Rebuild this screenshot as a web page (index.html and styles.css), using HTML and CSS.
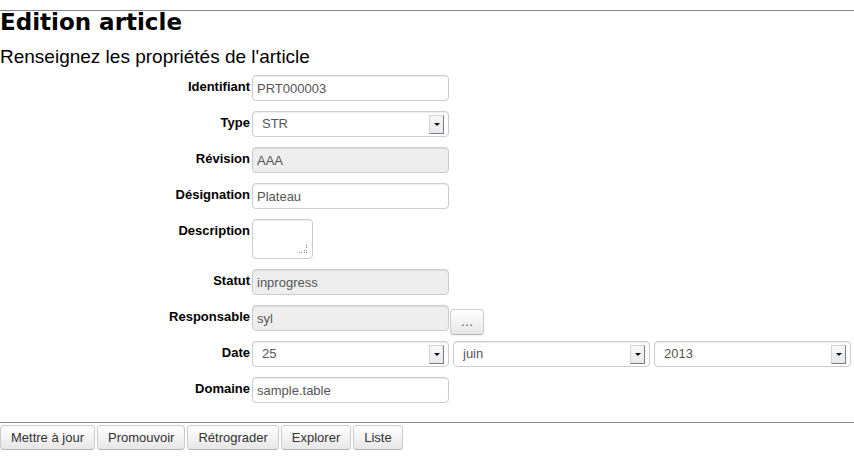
FILE: index.html
```html
<!DOCTYPE html>
<html lang="fr">
<head>
<meta charset="utf-8">
<title>Edition article</title>
<link rel="stylesheet" href="styles.css">
</head>
<body>
<header class="head">
  <h1 class="title">Edition article</h1>
  <h2 class="subtitle">Renseignez les propriétés de l'article</h2>
</header>
<form class="form">
  <label class="lbl">Identifiant</label>
  <div class="field"><input class="inp" value="PRT000003"></div>

  <label class="lbl">Type</label>
  <div class="field"><div class="sel"><select class="sel-box"><option>STR</option></select><span class="arrow"></span></div></div>

  <label class="lbl">Révision</label>
  <div class="field"><input class="inp ro" value="AAA" readonly></div>

  <label class="lbl">Désignation</label>
  <div class="field"><input class="inp" value="Plateau"></div>

  <label class="lbl">Description</label>
  <div class="field"><div class="ta-wrap"><textarea class="ta"></textarea><svg class="grip" width="8" height="8" viewBox="0 0 8 8"><g fill="#8a8a8a"><rect x="7" y="0" width="1" height="1"/><rect x="7" y="2" width="1" height="1"/><rect x="7" y="5" width="1" height="1"/><rect x="7" y="7" width="1" height="1"/><rect x="5" y="5" width="1" height="1"/><rect x="5" y="7" width="1" height="1"/><rect x="2" y="7" width="1" height="1"/><rect x="0" y="7" width="1" height="1"/></g></svg></div></div>

  <label class="lbl">Statut</label>
  <div class="field"><input class="inp ro" value="inprogress" readonly></div>

  <label class="lbl">Responsable</label>
  <div class="field field-tight"><input class="inp ro" value="syl" readonly><button type="button" class="btn btn-more">…</button></div>

  <label class="lbl">Date</label>
  <div class="field">
    <div class="sel"><select class="sel-box"><option>25</option></select><span class="arrow"></span></div>
    <div class="sel"><select class="sel-box"><option>juin</option></select><span class="arrow"></span></div>
    <div class="sel"><select class="sel-box"><option>2013</option></select><span class="arrow"></span></div>
  </div>

  <label class="lbl">Domaine</label>
  <div class="field"><input class="inp" value="sample.table"></div>
</form>
<div class="actions">
  <button type="button" class="btn">Mettre à jour</button>
  <button type="button" class="btn">Promouvoir</button>
  <button type="button" class="btn">Rétrograder</button>
  <button type="button" class="btn">Explorer</button>
  <button type="button" class="btn">Liste</button>
</div>
</body>
</html>
```
FILE: styles.css
```css
html, body {
  margin: 0;
  padding: 0;
  background: #fff;
}
body {
  font-family: "Liberation Sans", Arial, sans-serif;
  color: #000;
}
.head {
  margin-top: 10px;
  border-top: 1px solid #858585;
}
.title {
  margin: 0;
  font-family: "DejaVu Sans", sans-serif;
  font-weight: bold;
  font-size: 23px;
  line-height: 23px;
}
.subtitle {
  margin: 12px 0 0;
  font-family: "Liberation Sans", Arial, sans-serif;
  font-weight: normal;
  font-size: 19px;
  line-height: 22px;
}
.form {
  display: grid;
  grid-template-columns: 250px 1fr;
  column-gap: 2px;
  row-gap: 10px;
  margin-top: 7px;
}
.lbl {
  text-align: right;
  font-weight: bold;
  font-size: 13px;
  line-height: 16px;
  padding-top: 4px;
}
.field {
  display: flex;
  gap: 4px;
  align-items: flex-start;
}
.field-tight {
  gap: 1px;
}
.inp, .sel-box, .ta {
  box-sizing: border-box;
  margin: 0;
  border: 1px solid #ccc;
  border-radius: 4px;
  background: #fff;
  color: #555;
  font-family: "Liberation Sans", Arial, sans-serif;
  font-size: 13px;
  box-shadow: inset 0 1px 1px rgba(0, 0, 0, 0.075);
  outline: none;
}
.inp {
  width: 197px;
  height: 26px;
  padding: 3px 4px;
  line-height: 18px;
}
.inp.ro {
  background: #eee;
}
.sel {
  position: relative;
  width: 197px;
  height: 26px;
}
.sel-box {
  appearance: none;
  -webkit-appearance: none;
  width: 197px;
  height: 26px;
  padding: 0 24px 0 9px;
  line-height: 24px;
}
.arrow {
  position: absolute;
  right: 5px;
  top: 4px;
  box-sizing: border-box;
  width: 15px;
  height: 19px;
  border: 1px solid #d4d4d4;
  border-right-color: #7c7c7c;
  border-bottom-color: #7c7c7c;
  background: linear-gradient(#f8f8f8, #e7e9ed);
  pointer-events: none;
}
.arrow::after {
  content: "";
  position: absolute;
  left: 4px;
  top: 7px;
  border-left: 3px solid transparent;
  border-right: 3px solid transparent;
  border-top: 3px solid #111;
}
.ta-wrap {
  position: relative;
  width: 61px;
  height: 40px;
}
.ta {
  display: block;
  width: 61px;
  height: 40px;
  resize: none;
  padding: 3px 4px;
}
.grip {
  position: absolute;
  right: 6px;
  bottom: 6px;
}
.actions {
  margin-top: 19px;
  border-top: 1px solid #858585;
  padding-top: 2px;
  display: flex;
  gap: 2px;
}
.btn {
  box-sizing: border-box;
  margin: 0;
  height: 25px;
  padding: 0 10px;
  font-family: "Liberation Sans", Arial, sans-serif;
  font-size: 13px;
  line-height: 23px;
  color: #333;
  border: 1px solid #ccc;
  border-bottom-color: #b3b3b3;
  border-radius: 4px;
  background: linear-gradient(#ffffff, #e6e6e6);
  box-shadow: inset 0 1px 0 rgba(255, 255, 255, 0.2), 0 1px 2px rgba(0, 0, 0, 0.05);
}
.btn-more {
  width: 34px;
  height: 26px;
  padding: 0;
  margin-top: 4px;
  margin-bottom: -4px;
  line-height: 24px;
  color: #555;
}
```
